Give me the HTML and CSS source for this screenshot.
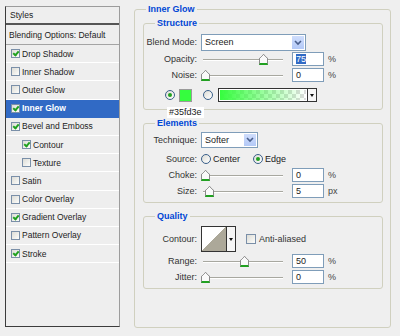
FILE: index.html
```html
<!DOCTYPE html>
<html lang="en">
<head>
    <meta charset="UTF-8">
    <title>Layer Style - Inner Glow</title>
    <link rel="stylesheet" href="styles.css">
</head>
<body>
<div class="dialog">
    <div class="styles-list">
        <div class="list-head">Styles</div>
        <div class="list-item blending">Blending Options: Default</div>
        <div class="list-item"><span class="check on"></span>Drop Shadow</div>
        <div class="list-item"><span class="check"></span>Inner Shadow</div>
        <div class="list-item"><span class="check"></span>Outer Glow</div>
        <div class="list-item selected"><span class="check on"></span>Inner Glow</div>
        <div class="list-item"><span class="check on"></span>Bevel and Emboss</div>
        <div class="list-item sub"><span class="check on"></span>Contour</div>
        <div class="list-item sub"><span class="check"></span>Texture</div>
        <div class="list-item"><span class="check"></span>Satin</div>
        <div class="list-item"><span class="check"></span>Color Overlay</div>
        <div class="list-item"><span class="check on"></span>Gradient Overlay</div>
        <div class="list-item"><span class="check"></span>Pattern Overlay</div>
        <div class="list-item"><span class="check on"></span>Stroke</div>
    </div>

    <fieldset class="group outer">
        <legend>Inner Glow</legend>

        <fieldset class="group structure">
            <legend>Structure</legend>
            <div class="row row-first">
                <span class="lbl">Blend Mode:</span>
                <div class="select blend">
                    <span class="val">Screen</span>
                    <span class="btn"><svg width="12" height="13" viewBox="0 0 12 13"><path d="M3 5 L6 8 L9 5" fill="none" stroke="#4a5f8c" stroke-width="1.6"/></svg></span>
                </div>
            </div>
            <div class="row">
                <span class="lbl">Opacity:</span>
                <div class="slider"><span class="track"></span><span class="thumb" style="left:58px"></span></div>
                <div class="num"><span class="sel">75</span></div>
                <span class="unit">%</span>
            </div>
            <div class="row">
                <span class="lbl">Noise:</span>
                <div class="slider"><span class="track"></span><span class="thumb" style="left:0px"></span></div>
                <div class="num">0</div>
                <span class="unit">%</span>
            </div>
            <div class="row row-color">
                <span class="radio on"></span>
                <span class="swatch"></span>
                <span class="radio second"></span>
                <div class="gradient">
                    <span class="ramp"></span>
                    <span class="mini-btn"></span>
                </div>
                <span class="tooltip">#35fd3e</span>
            </div>
        </fieldset>

        <fieldset class="group elements">
            <legend>Elements</legend>
            <div class="row row-tech">
                <span class="lbl">Technique:</span>
                <div class="select tech">
                    <span class="val">Softer</span>
                    <span class="btn"><svg width="12" height="13" viewBox="0 0 12 13"><path d="M3 5 L6 8 L9 5" fill="none" stroke="#4a5f8c" stroke-width="1.6"/></svg></span>
                </div>
            </div>
            <div class="row row-source">
                <span class="lbl">Source:</span>
                <span class="opt"><span class="radio"></span>Center</span>
                <span class="opt edge"><span class="radio on"></span>Edge</span>
            </div>
            <div class="row">
                <span class="lbl">Choke:</span>
                <div class="slider"><span class="track"></span><span class="thumb" style="left:0px"></span></div>
                <div class="num">0</div>
                <span class="unit">%</span>
            </div>
            <div class="row">
                <span class="lbl">Size:</span>
                <div class="slider"><span class="track"></span><span class="thumb" style="left:4px"></span></div>
                <div class="num">5</div>
                <span class="unit">px</span>
            </div>
        </fieldset>

        <fieldset class="group quality">
            <legend>Quality</legend>
            <div class="row row-contour">
                <span class="lbl">Contour:</span>
                <div class="contour">
                    <span class="curve"></span>
                    <span class="mini-btn"></span>
                </div>
                <span class="check aa"></span>
                <span class="aa-text">Anti-aliased</span>
            </div>
            <div class="row row-range">
                <span class="lbl">Range:</span>
                <div class="slider"><span class="track"></span><span class="thumb" style="left:39px"></span></div>
                <div class="num">50</div>
                <span class="unit">%</span>
            </div>
            <div class="row">
                <span class="lbl">Jitter:</span>
                <div class="slider"><span class="track"></span><span class="thumb" style="left:0px"></span></div>
                <div class="num">0</div>
                <span class="unit">%</span>
            </div>
        </fieldset>
    </fieldset>
</div>
</body>
</html>
```

FILE: styles.css
```css
* {
    box-sizing: border-box;
}

body {
    margin: 0;
    background-color: #efefef;
    font-family: 'Liberation Sans', Arial, sans-serif;
    font-size: 9px;
    color: #222;
}

.dialog {
    display: flex;
    align-items: flex-start;
}

/* left list */

.styles-list {
    margin: 6px 0 0 5px;
    width: 115px;
    height: 321px;
    background-color: #eeeeee;
    border: 1px solid #9c9c9c;
    border-left-color: #3c3c3c;
    border-bottom-color: #3c3c3c;
    font-size: 8.5px;
}

.list-head {
    height: 18px;
    line-height: 16px;
    padding-left: 4px;
    border-bottom: 2px solid #555;
}

.list-item {
    display: flex;
    align-items: center;
    height: 18.2px;
    padding-left: 5px;
    border-bottom: 1px solid #fff;
}

.list-item.blending {
    height: 20px;
    padding-left: 3px;
    border-bottom: 1px solid #a4a4a4;
}

.list-item.sub {
    padding-left: 16px;
}

.list-item.selected {
    background-color: #316ac5;
    color: #fff;
    font-weight: bold;
    border-bottom-color: #316ac5;
}

.check {
    position: relative;
    width: 9px;
    height: 9px;
    margin-right: 2px;
    border: 1px solid #7a8fa8;
    background: linear-gradient(135deg, #dcdcd6, #fdfdfb);
    flex-shrink: 0;
}

.check.on::after {
    content: "";
    position: absolute;
    left: 1px;
    top: 0px;
    width: 2px;
    height: 4px;
    border: solid #21a121;
    border-width: 0 2px 2px 0;
    transform: translate(1px, 0) rotate(40deg);
}

/* right side group boxes */

.group {
    margin: 0;
    padding: 0;
    min-width: 0;
    border: 1px solid #d0d0bf;
    border-radius: 3px;
}

.group legend {
    padding: 0 2px;
    margin-left: 11px;
    line-height: 14px;
    font-weight: bold;
    color: #0046d5;
}

.outer {
    margin: 2px 0 0 14px;
    width: 257px;
    height: 326px;
}

.structure,
.elements,
.quality {
    margin: 0 7px 0 8px;
}

.structure {
    padding-bottom: 7px;
}

.elements {
    margin-top: 6px;
    padding-bottom: 3px;
}

.quality {
    margin-top: 6px;
    padding-bottom: 3px;
}

.row {
    position: relative;
    display: flex;
    align-items: center;
    height: 16px;
}

.row-first {
    margin-top: 3px;
    height: 18px;
}

.row-tech {
    margin-top: 1px;
    height: 17px;
}

.row-source {
    margin-top: 3px;
}

.row-contour {
    margin-top: 3px;
    height: 26px;
}

.row-range {
    margin-top: 1px;
}

.row-color {
    margin-top: 5px;
    height: 14px;
    padding-left: 21px;
}

.lbl {
    width: 53px;
    margin-right: 4px;
    text-align: right;
    color: #333;
}

/* controls */

.select {
    display: flex;
    height: 17px;
    border: 1px solid #7f9db9;
    background-color: #fff;
}

.select.blend {
    width: 105px;
}

.select.tech {
    width: 57px;
    height: 16px;
}

.select .val {
    flex: 1;
    padding-left: 3px;
    line-height: 15px;
}

.select .btn {
    width: 14px;
    display: flex;
    align-items: center;
    justify-content: center;
    background: linear-gradient(#cfddfc, #b3c9f7);
    border: 1px solid #fff;
}

.slider {
    position: relative;
    width: 88px;
    height: 16px;
}

.track {
    position: absolute;
    left: 2px;
    right: 6px;
    top: 8px;
    height: 2px;
    border-top: 1px solid #a8a8a0;
    border-bottom: 1px solid #fff;
}

.thumb {
    position: absolute;
    top: 3px;
    width: 9px;
    height: 11px;
    background-color: #fafafa;
    border: 1px solid #8a8a8a;
    border-bottom: 2px solid #21a121;
    clip-path: polygon(50% 0, 100% 40%, 100% 100%, 0 100%, 0 40%);
}

.thumb::before {
    content: "";
    position: absolute;
    left: -1px;
    top: -1px;
    width: 9px;
    height: 5px;
    background: linear-gradient(to bottom right, transparent 45%, #8a8a8a 45%, #8a8a8a 60%, transparent 60%) left / 50% 100% no-repeat,
                linear-gradient(to bottom left, transparent 45%, #8a8a8a 45%, #8a8a8a 60%, transparent 60%) right / 50% 100% no-repeat;
}

.num {
    margin-left: 3px;
    width: 32px;
    height: 14px;
    padding-left: 3px;
    line-height: 12px;
    background-color: #fff;
    border: 1px solid #7f9db9;
}

.num .sel {
    background-color: #316ac5;
    color: #fff;
}

.unit {
    margin-left: 4px;
    color: #444;
}

.radio {
    position: relative;
    width: 10px;
    height: 10px;
    border: 1px solid #3a5f8a;
    border-radius: 50%;
    background: linear-gradient(135deg, #dcdcd6, #fff);
    flex-shrink: 0;
}

.radio.on::after {
    content: "";
    position: absolute;
    left: 2px;
    top: 2px;
    width: 4px;
    height: 4px;
    border-radius: 50%;
    background-color: #21a121;
}

.radio.second {
    margin-left: 11px;
}

.swatch {
    margin-left: 4px;
    width: 13px;
    height: 13px;
    background-color: #35fd3e;
    border: 1px solid #9a9a9a;
}

.gradient {
    display: flex;
    margin-left: 5px;
    width: 99px;
    height: 14px;
    border: 1px solid #333;
}

.ramp {
    flex: 1;
    background-image: linear-gradient(to right, #35fd3e, rgba(53, 253, 62, 0)),
                      conic-gradient(#dcdcdc 25%, #fff 0 50%, #dcdcdc 0 75%, #fff 0);
    background-size: 100% 100%, 8px 8px;
    border: 1px solid #fff;
}

.mini-btn {
    position: relative;
    width: 9px;
    border-left: 1px solid #333;
    background-color: #f6f6f6;
}

.mini-btn::after {
    content: "";
    position: absolute;
    left: 2px;
    top: 50%;
    margin-top: -1px;
    border-left: 2px solid transparent;
    border-right: 2px solid transparent;
    border-top: 3px solid #111;
}

.tooltip {
    position: absolute;
    left: 23px;
    top: 19px;
    z-index: 2;
    padding: 0 2px;
    line-height: 11px;
    background-color: #fff;
    color: #222;
}

.opt {
    display: flex;
    align-items: center;
    gap: 2px;
}

.opt:first-of-type {
    margin-left: -2px;
}

.opt.edge {
    margin-left: 13px;
}

.contour {
    display: flex;
    width: 35px;
    height: 26px;
    border: 1px solid #333;
}

.curve {
    flex: 1;
    background: linear-gradient(to bottom right, #fff 50%, #aca899 50%);
}

.check.aa {
    width: 10px;
    height: 10px;
    margin: 0 3px 0 10px;
}

.aa-text {
    color: #333;
}
```
